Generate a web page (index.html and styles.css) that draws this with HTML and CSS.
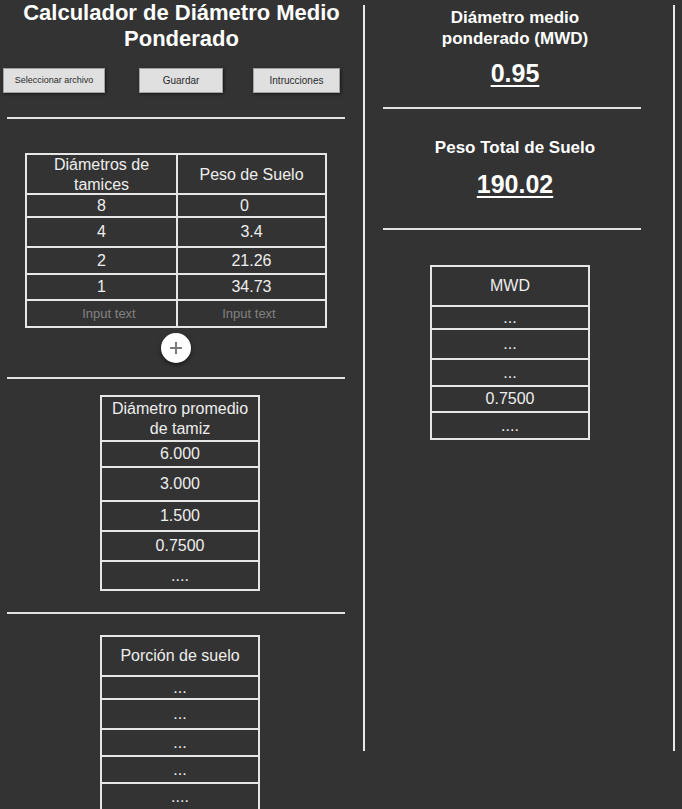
FILE: index.html
```html
<!DOCTYPE html>
<html lang="es">
<head>
<meta charset="utf-8">
<title>Calculador de Diámetro Medio Ponderado</title>
<link rel="stylesheet" href="styles.css">
</head>
<body>
<div class="page">
  <section class="left">
    <h1 class="title">Calculador de Diámetro Medio Ponderado</h1>
    <div class="actions">
      <button class="btn btn-file">Seleccionar archivo</button>
      <button class="btn btn-save">Guardar</button>
      <button class="btn btn-help">Intrucciones</button>
    </div>
    <hr class="rule">
    <div class="tbl tbl-input">
      <div class="row h40"><div class="cell">Diámetros de tamices</div><div class="cell">Peso de Suelo</div></div>
      <div class="row h23"><div class="cell">8</div><div class="cell shift-zero">0</div></div>
      <div class="row h30"><div class="cell">4</div><div class="cell">3.4</div></div>
      <div class="row h27"><div class="cell">2</div><div class="cell">21.26</div></div>
      <div class="row h26"><div class="cell">1</div><div class="cell">34.73</div></div>
      <div class="row h27"><div class="cell ph ph-a">Input text</div><div class="cell ph ph-b">Input text</div></div>
    </div>
    <button class="add" aria-label="Agregar fila">
      <svg width="14" height="14" viewBox="0 0 14 14"><path d="M7 1v12M1 7h12" stroke="#7a7a7a" stroke-width="2" fill="none"/></svg>
    </button>
    <hr class="rule rule-2">
    <div class="tbl tbl-narrow tbl-avg">
      <div class="row h45"><div class="cell">Diámetro promedio de tamiz</div></div>
      <div class="row h26"><div class="cell">6.000</div></div>
      <div class="row h34"><div class="cell">3.000</div></div>
      <div class="row h30"><div class="cell">1.500</div></div>
      <div class="row h30"><div class="cell">0.7500</div></div>
      <div class="row h29"><div class="cell">....</div></div>
    </div>
    <hr class="rule rule-3">
    <div class="tbl tbl-narrow tbl-portion">
      <div class="row h40"><div class="cell">Porción de suelo</div></div>
      <div class="row h23"><div class="cell">...</div></div>
      <div class="row h30"><div class="cell">...</div></div>
      <div class="row h27"><div class="cell">...</div></div>
      <div class="row h27"><div class="cell">...</div></div>
      <div class="row h27"><div class="cell">....</div></div>
    </div>
  </section>
  <div class="vline"></div>
  <section class="right">
    <h2 class="stat-label">Diámetro medio ponderado (MWD)</h2>
    <div class="stat-value">0.95</div>
    <hr class="rule-r">
    <h2 class="stat-label stat-label-2">Peso Total de Suelo</h2>
    <div class="stat-value stat-value-2">190.02</div>
    <hr class="rule-r rule-r2">
    <div class="tbl tbl-narrow tbl-mwd">
      <div class="row h40"><div class="cell">MWD</div></div>
      <div class="row h23"><div class="cell">...</div></div>
      <div class="row h30"><div class="cell">...</div></div>
      <div class="row h27"><div class="cell">...</div></div>
      <div class="row h26"><div class="cell">0.7500</div></div>
      <div class="row h27"><div class="cell">....</div></div>
    </div>
  </section>
  <div class="vline"></div>
</div>
</body>
</html>
```
FILE: styles.css
```css
* { box-sizing: border-box; }
html, body { margin: 0; padding: 0; background: #333333; }
body { font-family: "Liberation Sans", Arial, sans-serif; color: #eeeeee; }

.page {
  display: flex;
  align-items: flex-start;
  height: 809px;
  overflow: hidden;
}

.left {
  width: 363px;
  flex: none;
  display: flex;
  flex-direction: column;
  align-items: flex-start;
}

.title {
  margin: 0;
  width: 363px;
  text-align: center;
  font-size: 22px;
  line-height: 26px;
  font-weight: bold;
  color: #ffffff;
}

.actions {
  display: flex;
  margin-top: 16px;
}

.btn {
  height: 25px;
  padding: 0;
  background: #e0e0e0;
  border: 1px solid #a2a2a2;
  box-shadow: 1px 1px 3px rgba(0, 0, 0, 0.55);
  color: #2a2a2a;
  font-family: "Liberation Sans", Arial, sans-serif;
  font-size: 10px;
  line-height: 1;
}
.btn-file { width: 102px; margin-left: 3px; font-size: 9px; }
.btn-save { width: 84px; margin-left: 34px; }
.btn-help { width: 87px; margin-left: 30px; }

.rule {
  margin: 24px 0 0 7px;
  width: 338px;
  height: 2px;
  border: 0;
  background: #e2e2e2;
}
.rule-2 { margin-top: 14px; }
.rule-3 { margin-top: 21px; }

.tbl {
  border: 2px solid #e6e6e6;
  border-bottom: 0;
  font-size: 16px;
  line-height: 20px;
  color: #eeeeee;
}
.tbl-input { width: 302px; margin: 34px 0 0 25px; }
.tbl-input .row { grid-template-columns: minmax(0, 149fr) minmax(0, 149fr); }
.tbl-narrow { width: 160px; }
.tbl-avg { margin: 16px 0 0 100px; }
.tbl-portion { margin: 21px 0 0 100px; }
.tbl-mwd { margin: 35px 0 0 65px; }

.row {
  display: grid;
  grid-template-columns: minmax(0, 1fr);
  border-bottom: 2px solid #e6e6e6;
}
.h23 { height: 23px; }
.h26 { height: 26px; }
.h27 { height: 27px; }
.h29 { height: 29px; }
.h30 { height: 30px; }
.h34 { height: 34px; }
.h40 { height: 40px; }
.h45 { height: 45px; }

.cell {
  display: flex;
  align-items: center;
  justify-content: center;
  text-align: center;
  padding: 0 6px;
}
.cell + .cell { border-left: 2px solid #e6e6e6; }

.shift-zero { padding: 0 14px 0 0; }
.ph { color: #828282; font-size: 13px; }
.ph-a { padding: 0 0 0 15px; }
.ph-b { padding: 0 5px 0 0; }

.add {
  margin: 5px 0 0 161px;
  width: 30px;
  height: 30px;
  padding: 0;
  border: 0;
  border-radius: 50%;
  background: #ffffff;
  box-shadow: 0 2px 4px rgba(0, 0, 0, 0.5);
  display: flex;
  align-items: center;
  justify-content: center;
}

.vline {
  flex: none;
  width: 2px;
  height: 746px;
  margin-top: 5px;
  background: #e8e8e8;
}

.right {
  width: 308px;
  flex: none;
  display: flex;
  flex-direction: column;
  align-items: flex-start;
}

.stat-label {
  margin: 7px 0 0 50px;
  width: 200px;
  text-align: center;
  font-size: 17px;
  line-height: 21px;
  font-weight: bold;
  color: #ffffff;
}
.stat-label-2 { margin-top: 28px; }

.stat-value {
  margin-top: 9px;
  margin-left: 50px;
  width: 200px;
  text-align: center;
  font-size: 25px;
  line-height: 30px;
  font-weight: bold;
  color: #ffffff;
  text-decoration: underline;
  text-decoration-thickness: 2px;
  text-underline-offset: 3px;
}
.stat-value-2 { margin-top: 11px; }

.rule-r {
  margin: 19px 0 0 18px;
  width: 258px;
  height: 2px;
  border: 0;
  background: #e2e2e2;
}
.rule-r2 { margin-top: 29px; }
```
